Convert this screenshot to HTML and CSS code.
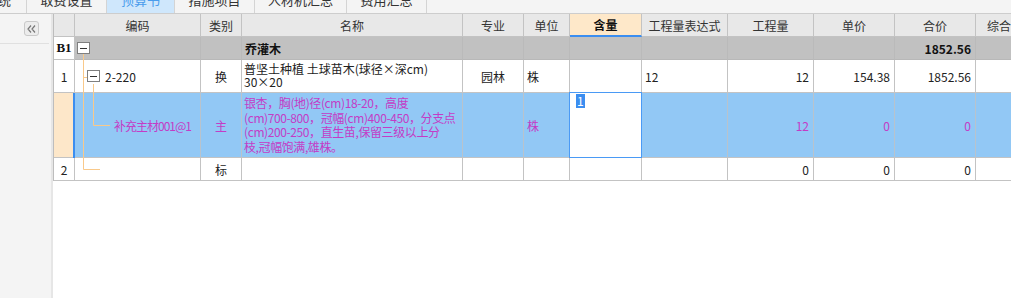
FILE: index.html
```html
<!DOCTYPE html>
<html lang="zh-CN">
<head>
<meta charset="utf-8">
<title>预算书</title>
<link rel="stylesheet" href="styles.css">
</head>
<body>
<div class="app">
  <div class="tabs">
    <div class="tab tab-first"><span class="tab-text">统</span></div>
    <div class="tab tab-w80"><span class="tab-text">取费设置</span></div>
    <div class="tab tab-sel"><span class="tab-text">预算书</span></div>
    <div class="tab tab-w80"><span class="tab-text">措施项目</span></div>
    <div class="tab tab-w92"><span class="tab-text">人材机汇总</span></div>
    <div class="tab tab-w80"><span class="tab-text">费用汇总</span></div>
  </div>
  <div class="main">
    <div class="side">
      <div class="collapse-btn">
        <svg width="9" height="8" viewBox="0 0 9 8"><path d="M4 0.5 L1 4 L4 7.5 M8 0.5 L5 4 L8 7.5" fill="none" stroke="#777" stroke-width="1.2"/></svg>
      </div>
      <div class="side-line"></div>
    </div>
    <div class="gridwrap">
      <div class="grid">
        <!-- header -->
        <div class="c h"></div>
        <div class="c h">编码</div>
        <div class="c h">类别</div>
        <div class="c h">名称</div>
        <div class="c h">专业</div>
        <div class="c h">单位</div>
        <div class="c h h-sel">含量</div>
        <div class="c h">工程量表达式</div>
        <div class="c h">工程量</div>
        <div class="c h">单价</div>
        <div class="c h">合价</div>
        <div class="c h h-left">综合</div>

        <!-- B1 -->
        <div class="c num num-b1">B1</div>
        <div class="c g left"><span class="tbox tbox-b1"></span></div>
        <div class="c g"></div>
        <div class="c g left bold">乔灌木</div>
        <div class="c g"></div>
        <div class="c g"></div>
        <div class="c g"></div>
        <div class="c g"></div>
        <div class="c g"></div>
        <div class="c g"></div>
        <div class="c g right bold">1852.56</div>
        <div class="c g"></div>

        <!-- row 1 -->
        <div class="c num">1</div>
        <div class="c left"><span class="tbox tbox-r1"></span><span class="code">2-220</span></div>
        <div class="c">换</div>
        <div class="c left ml">普坚土种植 土球苗木(球径×深cm)<br>30×20</div>
        <div class="c">园林</div>
        <div class="c left">株</div>
        <div class="c"></div>
        <div class="c left">12</div>
        <div class="c right">12</div>
        <div class="c right">154.38</div>
        <div class="c right">1852.56</div>
        <div class="c"></div>

        <!-- highlighted row -->
        <div class="c num num-sel"></div>
        <div class="c hl left mg hl-first"><span class="sub">补充主材001@1</span></div>
        <div class="c hl mg">主</div>
        <div class="c hl left mg ml2">银杏，胸(地)径(cm)18-20，高度<br>(cm)700-800，冠幅(cm)400-450，分支点<br>(cm)200-250，直生苗,保留三级以上分<br>枝,冠幅饱满,雄株。</div>
        <div class="c hl"></div>
        <div class="c hl left mg">株</div>
        <div class="c editor"><span class="sel-text">1</span></div>
        <div class="c hl"></div>
        <div class="c hl right mg">12</div>
        <div class="c hl right mg">0</div>
        <div class="c hl right mg">0</div>
        <div class="c hl"></div>

        <!-- row 2 -->
        <div class="c num">2</div>
        <div class="c"></div>
        <div class="c">标</div>
        <div class="c"></div>
        <div class="c"></div>
        <div class="c"></div>
        <div class="c"></div>
        <div class="c"></div>
        <div class="c right">0</div>
        <div class="c right">0</div>
        <div class="c right">0</div>
        <div class="c"></div>
      </div>
      <svg class="tree" width="80" height="170" viewBox="0 0 80 170">
        <g stroke="#f9c98a" stroke-width="1" fill="none">
          <path d="M30.5 40 V155.5 H47"/>
          <path d="M30 63.5 H34"/>
          <path d="M40.5 70 V111.5 H57"/>
        </g>
      </svg>
    </div>
  </div>
</div>
</body>
</html>
```

FILE: styles.css
```css
* { box-sizing: border-box; }
html, body { margin: 0; padding: 0; background: #ffffff; }
body {
  width: 1011px;
  height: 298px;
  overflow: hidden;
  font-family: "Noto Sans CJK SC", "Noto Sans", sans-serif;
  font-size: 12px;
  color: #222;
}
.app { display: flex; flex-direction: column; height: 298px; }

/* tabs */
.tabs {
  display: flex;
  height: 14px;
  background: #f4f4f4;
  border-bottom: 1px solid #cdcdcd;
  overflow: hidden;
  flex: none;
}
.tab {
  height: 13px;
  border-right: 1px solid #d4d4d4;
  background: #f4f4f4;
  display: flex;
  justify-content: center;
  overflow: hidden;
  color: #333;
  font-size: 13px;
}
.tab-text { display: block; line-height: 12px; margin-top: -6px; white-space: nowrap; }
.tab-first { width: 27px; justify-content: flex-start; }
.tab-first .tab-text { margin-left: -2px; }
.tab-w80 { width: 80px; }
.tab-w92 { width: 92px; }
.tab-sel { width: 68px; background: #cfe7fc; color: #4a9cec; }

/* main */
.main { display: flex; flex: 1; min-height: 0; }
.side {
  width: 53px;
  flex: none;
  background: #f4f4f4;
  border-right: 2px solid #e6e6e6;
  padding-top: 7px;
}
.collapse-btn {
  width: 15px;
  height: 15px;
  margin-left: 24px;
  border: 1px solid #c9c9c9;
  border-radius: 3px;
  background: #ececec;
  display: flex;
  align-items: center;
  justify-content: center;
}
.side-line { width: 49px; height: 1px; background: #e0e0e0; margin-top: 7px; }

.gridwrap { flex: 1; position: relative; overflow: hidden; min-width: 0; }
.tree { position: absolute; left: 0; top: 0; pointer-events: none; }

.grid {
  display: grid;
  grid-template-columns: 21px 126px 41px 221px 61px 46px 72px 86px 86px 81px 81px 80px;
  grid-template-rows: 23px 23px 33px 65px 23px;
  width: 1000px;
  border-left: 1px solid #bdbdbd;
}
.c {
  border-right: 1px solid #c3c3c3;
  border-bottom: 1px solid #c3c3c3;
  display: flex;
  align-items: center;
  justify-content: center;
  white-space: nowrap;
  overflow: hidden;
  background: #ffffff;
  padding: 0 3px;
}
.h { background: #e8e8e8; color: #333; }
.h-sel { background: #fee8c9; font-weight: bold; border-bottom: 2px solid #3b8ef0; color: #111; }
.h-left { justify-content: flex-start; padding-left: 11px; }

.g { background: #c1c1c1; border-right-color: #bababa; border-bottom-color: #b8b8b8; }
.num { padding: 0; }
.num-b1 { background: #ffffff; font-family: "Liberation Serif", serif; font-weight: bold; font-size: 13px; color: #111; }
.num-sel { background: #fde7c9; }
.left { justify-content: flex-start; }
.right { justify-content: flex-end; padding-right: 4px; }
.bold { font-weight: bold; color: #111; }

.tbox {
  width: 13px;
  height: 12px;
  border: 1px solid #7f7f7f;
  background: #fff;
  position: relative;
  flex: none;
}
.tbox::after {
  content: "";
  position: absolute;
  left: 2px;
  right: 2px;
  top: 5px;
  height: 1px;
  background: #333;
}
.tbox-b1 { margin-left: -1px; }
.tbox-r1 { margin-left: 9px; }
.code { margin-left: 5px; }
.sub { margin-left: 36px; letter-spacing: -1px; }

.ml { display: block; line-height: 13px; padding-top: 2px; padding-left: 2px; white-space: nowrap; }
.ml2 { display: block; line-height: 14.5px; padding-top: 3px; padding-left: 2px; white-space: nowrap; letter-spacing: -0.4px; }

.hl { background: #92c8f5; border-right-color: #b9c3cc; }
.hl-first { box-shadow: -2px 0 0 #3b8ef0; }
.mg { color: #c33cc6; }
.editor {
  background: #ffffff;
  border: 1px solid #4a9af5;
  margin-left: -1px;
  margin-top: -1px;
  align-items: flex-start;
  justify-content: flex-start;
  padding: 1px 0 0 6px;
}
.sel-text {
  display: block;
  background: #3b8ef0;
  color: #fff;
  line-height: 14px;
  padding: 0 1px;
}
```
